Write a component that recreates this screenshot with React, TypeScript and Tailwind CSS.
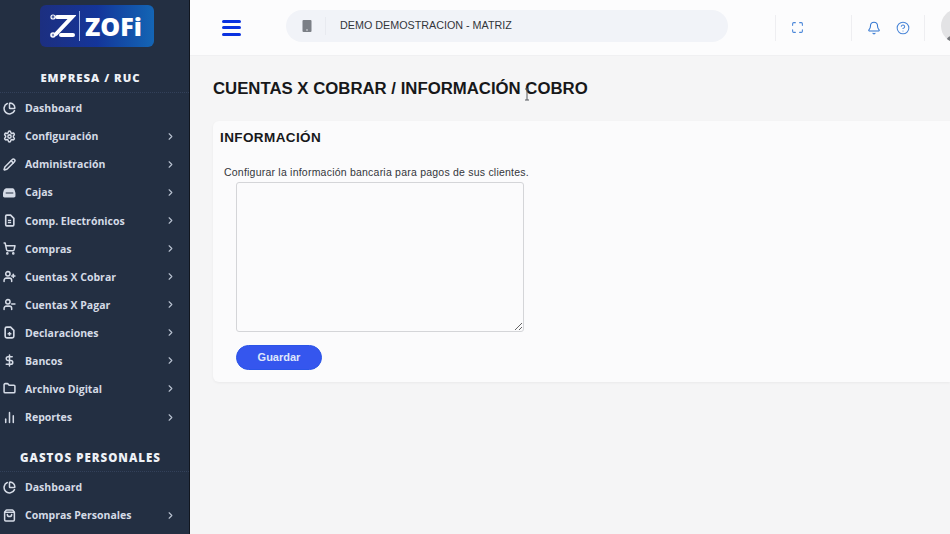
import {
  ChevronRight,
  PieChart,
  Settings,
  Pencil,
  ShoppingCart,
  UserPlus,
  UserMinus,
  DollarSign,
  Folder,
  BarChart2,
  ShoppingBag,
  Maximize,
  Bell,
  CircleHelp,
} from 'lucide-react';

type IconProps = { className?: string; strokeWidth?: number };
type Item = { label: string; icon: (props: IconProps) => React.ReactNode; arrow?: boolean };

// Iconos que no estan en el paquete
const CajaIcon = ({ className }: IconProps) => (
  <svg className={className} viewBox="0 0 24 24" fill="currentColor">
    <path d="M6 4h12c2 0 3 2 3.500 4l1.500 5v5c0 2-1 3-3 3H3c-2 0-3-1-3-3v-5l1.500-5C2.500 6 4 4 6 4zM5 12v2h14v-2z" fillRule="evenodd" />
  </svg>
);

const DocIcon = ({ className }: IconProps) => (
  <svg className={className} viewBox="0 0 24 24" fill="none" stroke="currentColor" strokeWidth="3">
    <path d="M5 4a2 2 0 0 1 2-2h7l6 6v12a2 2 0 0 1-2 2H7a2 2 0 0 1-2-2z" />
    <path d="M9 12h6M9 16h6" strokeWidth="2.500" />
  </svg>
);

const DeclIcon = ({ className }: IconProps) => (
  <svg className={className} viewBox="0 0 24 24" fill="none" stroke="currentColor" strokeWidth="3">
    <path d="M4 5a3 3 0 0 1 3-3h7l6 6v11a3 3 0 0 1-3 3H7a3 3 0 0 1-3-3z" />
    <path d="M12 11v7M8.500 14.500h7" strokeWidth="2.800" />
  </svg>
);

const empresa: Item[] = [
  { label: 'Dashboard', icon: PieChart },
  { label: 'Configuración', icon: Settings, arrow: true },
  { label: 'Administración', icon: Pencil, arrow: true },
  { label: 'Cajas', icon: CajaIcon, arrow: true },
  { label: 'Comp. Electrónicos', icon: DocIcon, arrow: true },
  { label: 'Compras', icon: ShoppingCart, arrow: true },
  { label: 'Cuentas X Cobrar', icon: UserPlus, arrow: true },
  { label: 'Cuentas X Pagar', icon: UserMinus, arrow: true },
  { label: 'Declaraciones', icon: DeclIcon, arrow: true },
  { label: 'Bancos', icon: DollarSign, arrow: true },
  { label: 'Archivo Digital', icon: Folder, arrow: true },
  { label: 'Reportes', icon: BarChart2, arrow: true },
];

const gastos: Item[] = [
  { label: 'Dashboard', icon: PieChart },
  { label: 'Compras Personales', icon: ShoppingBag, arrow: true },
];

const MenuRow = ({ item }: { item: Item }) => {
  const Icon = item.icon;
  return (
    <div className="flex h-[28.1px] shrink-0 items-center text-[#d5dbe6]">
      <div className="ml-[3px] h-[13px] w-[13px] shrink-0">
        <Icon className="h-[13px] w-[13px]" strokeWidth={2.8} />
      </div>
      <span className="ml-[9px] flex-1 pt-[2px] text-[10.5px] font-bold whitespace-nowrap">{item.label}</span>
      {item.arrow && <ChevronRight className="mr-[13px] h-[11px] w-[11px] text-[#b9c2d0]" strokeWidth={2.4} />}
    </div>
  );
};

const Logo = () => (
  <div className="mt-[5px] ml-[40px] flex h-[42px] w-[114px] shrink-0 items-center rounded-[6px] bg-gradient-to-r from-[#1c2f80] via-[#14359a] to-[#1465b4] pl-[10px]">
    <svg width="26" height="26" viewBox="0 0 26 26" fill="none" stroke="#ffffff" strokeWidth="4" strokeLinecap="round">
      <path d="M7 4h15L6 21" />
      <path d="M11 22h12" />
      <circle cx="3" cy="22" r="0.8" fill="#ffffff" />
      <circle cx="3" cy="4" r="0.6" fill="#ffffff" />
    </svg>
    <div className="mr-[5px] ml-[3px] h-[30px] w-px bg-[#9db4e8]" />
    <span className="text-[25px] leading-none font-extrabold text-white">ZOFi</span>
  </div>
);

const Sidebar = () => (
  <aside className="flex h-full w-[190px] shrink-0 flex-col overflow-hidden border-r border-[#11161f] bg-[#232f42] font-['Open_Sans',sans-serif]">
    <Logo />
    <div className="mt-[23px] pr-[8px] text-center text-[11.3px] leading-[16px] font-extrabold tracking-[1px] text-[#eef1f6]">EMPRESA / RUC</div>
    <div className="mt-[6px] mb-[1px] border-b border-dotted border-[#33415a]" />
    <div className="flex flex-col">
      {empresa.map((item) => (
        <MenuRow key={item.label} item={item} />
      ))}
    </div>
    <div className="mt-[19px] pr-[8px] text-center text-[11.5px] leading-[16px] font-extrabold tracking-[1px] text-[#eef1f6]">GASTOS PERSONALES</div>
    <div className="mt-[5px] mb-[1px] border-b border-dotted border-[#33415a]" />
    <div className="flex flex-col">
      {gastos.map((item) => (
        <MenuRow key={item.label} item={item} />
      ))}
    </div>
  </aside>
);

const Divider = ({ className }: { className: string }) => <div className={`h-[26px] w-px shrink-0 bg-[#eeeef1] ${className}`} />;

const Header = () => (
  <header className="flex h-[56px] shrink-0 items-center border-b border-[#f0f0f2] bg-[#fcfcfd]">
    <div className="ml-[32px] flex w-[19px] shrink-0 flex-col gap-[3.5px]">
      <div className="h-[3px] rounded-full bg-[#0a32e0]" />
      <div className="h-[3px] rounded-full bg-[#0a32e0]" />
      <div className="h-[3px] rounded-full bg-[#0a32e0]" />
    </div>
    <div className="mb-[4px] ml-[45px] flex h-[32px] w-[442px] shrink-0 items-center rounded-full bg-[#f1f3f8] pl-[16px]">
      <svg width="10" height="12" viewBox="0 0 10 12">
        <rect x="0.500" width="9" height="12" rx="1" fill="#7b7f86" />
        <circle cx="5" cy="10" r="0.8" fill="#e4e6ea" />
      </svg>
      <div className="ml-[13px] h-[18px] w-px bg-[#e8eaf0]" />
      <span className="ml-[14px] text-[10.75px] text-[#33363b]">DEMO DEMOSTRACION - MATRIZ</span>
    </div>
    <Divider className="ml-[47px]" />
    <Maximize className="ml-[15px] h-[13px] w-[13px] shrink-0 text-[#4a86d8]" strokeWidth={2} />
    <Divider className="ml-[47px]" />
    <Bell className="ml-[15px] h-[14px] w-[14px] shrink-0 text-[#2f74d0]" strokeWidth={1.8} />
    <CircleHelp className="ml-[15px] h-[14px] w-[14px] shrink-0 text-[#4a86d8]" strokeWidth={1.8} />
    <Divider className="ml-[14px]" />
    <div className="relative mb-[4px] ml-[16px] h-[34px] w-[34px] shrink-0 overflow-hidden rounded-full bg-[#e3e3e5]">
      <div className="absolute top-[27px] left-[5px] h-[12px] w-[16px] rounded-full bg-[#77797d]" />
    </div>
  </header>
);

export default function App() {
  return (
    <div className="relative flex h-[534px] w-[950px] overflow-hidden bg-[#f5f5f6] font-['Liberation_Sans',sans-serif]">
      <Sidebar />
      <main className="flex min-w-0 flex-1 flex-col">
        <Header />
        <div className="flex-1 pt-[22px] pl-[23px]">
          <h1 className="text-[16.75px] leading-[22px] font-bold whitespace-nowrap text-[#17181a]">CUENTAS X COBRAR / INFORMACIÓN COBRO</h1>
          <section className="mt-[21px] h-[261px] rounded-l-[6px] bg-[#fbfbfc] pt-[8px] pl-[7px] shadow-[0_1px_3px_rgba(0,0,0,0.05)]">
            <h2 className="text-[13.5px] leading-[18px] font-bold tracking-[0.4px] text-[#17181a]">INFORMACIÓN</h2>
            <p className="mt-[18px] ml-[4px] text-[10.5px] leading-[14px] tracking-[0.22px] text-[#33363b]">
              Configurar la información bancaria para pagos de sus clientes.
            </p>
            <div className="ml-[16px] flex flex-col items-start">
              <textarea className="mt-[3px] block h-[150px] w-[288px] rounded-[3px] border border-[#d4d5d8] bg-[#fbfbfc]" />
              <button className="mt-[13px] h-[25px] w-[86px] rounded-full border border-[#2a55e8] bg-[#3556ee] text-[11px] font-bold text-[#dfe6fb]">
                Guardar
              </button>
            </div>
          </section>
        </div>
      </main>
      {/* cursor de texto sobre el titulo */}
      <svg className="absolute top-[88px] left-[524px]" width="6" height="13" viewBox="0 0 6 13" fill="none" stroke="#55585c" strokeWidth="1">
        <path d="M1 1h4M3 1v11M1 12h4" />
      </svg>
    </div>
  );
}
